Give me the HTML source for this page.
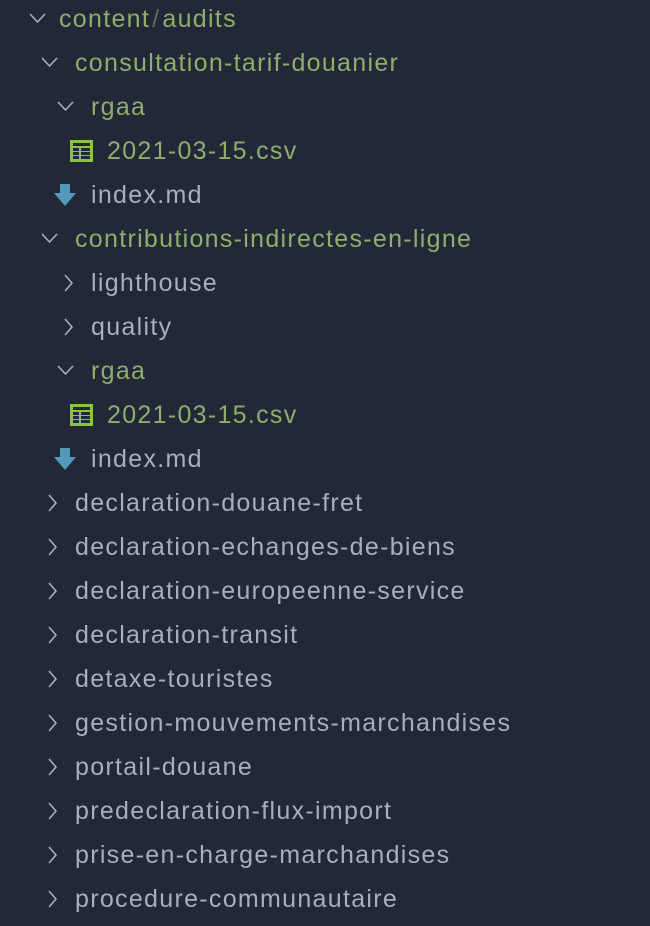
<!DOCTYPE html>
<html><head><meta charset="utf-8"><style>
html,body{margin:0;padding:0;background:#232838;width:650px;height:926px;overflow:hidden}
.r{position:absolute;height:44px;line-height:44px;font-family:"Liberation Sans",sans-serif;font-size:25px;letter-spacing:1.3px;white-space:nowrap;color:#a9aebb}
.g{color:#8fae6a}
svg{position:absolute}
</style></head><body>
<svg width="650" height="926" style="left:0;top:0" fill="none" stroke="#a9aebb" stroke-width="1.6">
<path d="M30 14 L37.5 22 L45 14"/>
<path d="M42 58 L49.5 66 L57 58"/>
<path d="M58 102 L65.5 110 L73 102"/>
<path d="M42 234 L49.5 242 L57 234"/>
<path d="M58 366 L65.5 374 L73 366"/>
<path d="M65 275 L72 283 L65 291"/>
<path d="M65 319 L72 327 L65 335"/>
<g>
<path d="M49 495 L56 503 L49 511"/>
<path d="M49 539 L56 547 L49 555"/>
<path d="M49 583 L56 591 L49 599"/>
<path d="M49 627 L56 635 L49 643"/>
<path d="M49 671 L56 679 L49 687"/>
<path d="M49 715 L56 723 L49 731"/>
<path d="M49 759 L56 767 L49 775"/>
<path d="M49 803 L56 811 L49 819"/>
<path d="M49 847 L56 855 L49 863"/>
<path d="M49 891 L56 899 L49 907"/>
</g>
<g stroke="none">
<rect x="70" y="140" width="23" height="22" fill="#8dc149"/>
<rect x="73" y="143" width="17" height="3" fill="#232838"/>
<rect x="73" y="148" width="6" height="3" fill="#232838"/><rect x="81" y="148" width="9" height="3" fill="#232838"/>
<rect x="73" y="152" width="6" height="3" fill="#232838"/><rect x="81" y="152" width="9" height="3" fill="#232838"/>
<rect x="73" y="156" width="6" height="3" fill="#232838"/><rect x="81" y="156" width="9" height="3" fill="#232838"/>
<rect x="70" y="404" width="23" height="22" fill="#8dc149"/>
<rect x="73" y="407" width="17" height="3" fill="#232838"/>
<rect x="73" y="412" width="6" height="3" fill="#232838"/><rect x="81" y="412" width="9" height="3" fill="#232838"/>
<rect x="73" y="416" width="6" height="3" fill="#232838"/><rect x="81" y="416" width="9" height="3" fill="#232838"/>
<rect x="73" y="420" width="6" height="3" fill="#232838"/><rect x="81" y="420" width="9" height="3" fill="#232838"/>
<path d="M60 184 H70 V193 H76 L65 206 L54 193 H60 Z" fill="#519aba"/>
<path d="M60 448 H70 V457 H76 L65 470 L54 457 H60 Z" fill="#519aba"/>
</g>
</svg>
<div class="r g" style="left:59px;top:-3px">content<span style="color:#5f6b58;margin:0 2px">/</span>audits</div>
<div class="r g" style="left:75px;top:41px">consultation-tarif-douanier</div>
<div class="r g" style="left:91px;top:85px">rgaa</div>
<div class="r g" style="left:107px;top:129px">2021-03-15.csv</div>
<div class="r" style="left:91px;top:173px">index.md</div>
<div class="r g" style="left:75px;top:217px">contributions-indirectes-en-ligne</div>
<div class="r" style="left:91px;top:261px">lighthouse</div>
<div class="r" style="left:91px;top:305px">quality</div>
<div class="r g" style="left:91px;top:349px">rgaa</div>
<div class="r g" style="left:107px;top:393px">2021-03-15.csv</div>
<div class="r" style="left:91px;top:437px">index.md</div>
<div class="r" style="left:75px;top:481px">declaration-douane-fret</div>
<div class="r" style="left:75px;top:525px">declaration-echanges-de-biens</div>
<div class="r" style="left:75px;top:569px">declaration-europeenne-service</div>
<div class="r" style="left:75px;top:613px">declaration-transit</div>
<div class="r" style="left:75px;top:657px">detaxe-touristes</div>
<div class="r" style="left:75px;top:701px">gestion-mouvements-marchandises</div>
<div class="r" style="left:75px;top:745px">portail-douane</div>
<div class="r" style="left:75px;top:789px">predeclaration-flux-import</div>
<div class="r" style="left:75px;top:833px">prise-en-charge-marchandises</div>
<div class="r" style="left:75px;top:877px">procedure-communautaire</div>
</body></html>
